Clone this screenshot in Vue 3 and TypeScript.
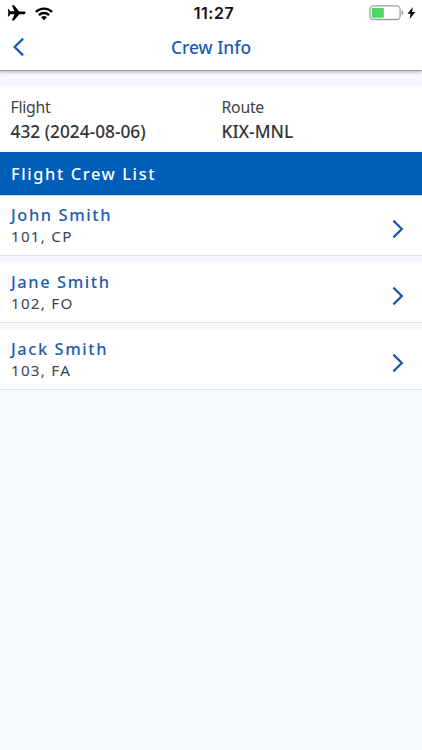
<script setup lang="ts">
interface CrewMember {
  name: string
  id: string
  role: string
}

const flight = { number: '432 (2024-08-06)', route: 'KIX-MNL' }

const crew: CrewMember[] = [
  { name: 'John Smith', id: '101', role: 'CP' },
  { name: 'Jane Smith', id: '102', role: 'FO' },
  { name: 'Jack Smith', id: '103', role: 'FA' },
]
</script>

<template>
  <div class="screen">
    <header class="header">
      <div class="status">
        <div class="status-left">
          <svg class="plane" width="19" height="18" viewBox="0 0 19 18">
            <path d="M18.6 8.8c0-.9-.8-1.35-1.8-1.35h-4.6L7 1.2H4.9L7.4 7.3H3.3L1.7 5.1H.8L1.4 8.8.8 12.5h.9l1.6-2.2h4.1L4.9 16.4H7l5.2-6.25h4.6c1 0 1.8-.45 1.8-1.35z" />
          </svg>
          <svg class="wifi" width="20" height="15" viewBox="0 0 20 15">
            <path class="arc" d="M1.9 5.9a11.6 11.6 0 0 1 16.2 0" />
            <path class="arc" d="M4.9 9.1a7.3 7.3 0 0 1 10.2 0" />
            <path d="M7.1 11.3a4.2 4.2 0 0 1 5.8 0L10 14.2z" />
          </svg>
        </div>
        <span class="time">11:27</span>
        <div class="status-right">
          <svg width="36" height="16" viewBox="0 0 36 16">
            <rect class="shell" x="0.9" y="0.9" width="30.2" height="13.6" rx="3.6" />
            <rect class="charge" x="2.8" y="2.9" width="12" height="9.8" rx="0.8" />
            <path class="cap" d="M32.6 5.1q1.9.6 1.9 2.6t-1.9 2.6z" />
          </svg>
          <svg width="9" height="14" viewBox="0 0 9 14">
            <path d="M5.9 1 .5 7.8h3L2.6 13.1 8.3 6H5z" />
          </svg>
        </div>
      </div>
      <nav class="nav">
        <button class="back" aria-label="Back">
          <svg width="12" height="20" viewBox="0 0 12 20">
            <path class="chevron" d="M10.1 1.6 1.6 10l8.5 8.4" />
          </svg>
        </button>
        <h1 class="title">Crew Info</h1>
      </nav>
    </header>

    <section class="summary">
      <div class="field">
        <span class="label">Flight</span>
        <span class="value">{{ flight.number }}</span>
      </div>
      <div class="field">
        <span class="label">Route</span>
        <span class="value">{{ flight.route }}</span>
      </div>
    </section>

    <h2 class="list-heading">Flight Crew List</h2>

    <ul class="list">
      <li v-for="member in crew" :key="member.id" class="row">
        <div class="person">
          <span class="name">{{ member.name }}</span>
          <span class="detail">{{ member.id }}, {{ member.role }}</span>
        </div>
        <svg class="go" width="12" height="20" viewBox="0 0 12 20">
          <path class="chevron" d="M1.4 1.6 9.8 10l-8.4 8.4" />
        </svg>
      </li>
    </ul>
  </div>
</template>

<style>
body {
  background: #f5f8fd;
}
</style>

<style scoped>
.screen {
  min-height: 750px;
  background: #f5f8fd;
  font-family: 'Noto Sans', 'Open Sans', sans-serif;
  color: #333538;
}
.header {
  box-sizing: border-box;
  height: 71px;
  background: #fff;
  border-bottom: 1px solid #a4a6a8;
  box-shadow: 0 1px 3px rgba(0, 0, 0, 0.3);
}
.status {
  display: grid;
  grid-template-columns: 1fr auto 1fr;
  align-items: center;
  height: 26px;
  padding: 0 6px 0 7px;
}
.status-left {
  display: flex;
  align-items: center;
  gap: 8px;
}
.arc {
  fill: none;
  stroke: #000;
  stroke-width: 2.3;
}
.time {
  padding-left: 5px;
  font: 600 16px/26px Inter, sans-serif;
  letter-spacing: 0.5px;
  color: #111;
}
.status-right {
  display: flex;
  align-items: center;
  justify-content: flex-end;
  gap: 2px;
}
.shell {
  fill: none;
  stroke: #a0a0a0;
  stroke-width: 1.3;
}
.charge {
  fill: #4cd662;
}
.cap {
  fill: #a0a0a0;
}
.nav {
  display: grid;
  grid-template-columns: 40px 1fr 40px;
  align-items: center;
  height: 42px;
}
.back {
  display: flex;
  padding: 0 0 0 12.5px;
  border: 0;
  background: none;
}
.chevron {
  fill: none;
  stroke: #1558ac;
  stroke-width: 2.2;
}
.title {
  margin: 0;
  text-align: center;
  font-size: 17.4px;
  font-weight: 500;
  line-height: 24px;
  color: #1a5cb2;
}
.summary {
  display: grid;
  grid-template-columns: 1fr 1fr;
  box-sizing: border-box;
  height: 65px;
  margin-top: 16px;
  padding-top: 8px;
  background: #fff;
}
.field {
  display: flex;
  flex-direction: column;
  padding-left: 10.5px;
}
.label {
  font-size: 15.8px;
  line-height: 24px;
  letter-spacing: -0.25px;
  color: #404246;
}
.value {
  font-size: 17.3px;
  font-weight: 500;
  line-height: 25px;
}
.list-heading {
  box-sizing: border-box;
  height: 43px;
  margin: 0;
  padding-left: 11px;
  font-size: 16.4px;
  font-weight: 500;
  line-height: 43px;
  letter-spacing: 1.6px;
  color: #fff;
  background: #005eb8;
}
.list {
  display: flex;
  flex-direction: column;
  gap: 6px;
  margin: 0;
  padding: 0;
  list-style: none;
}
.row {
  display: flex;
  align-items: center;
  justify-content: space-between;
  box-sizing: border-box;
  height: 61px;
  padding: 1px 18px 0 11px;
  background: #fff;
  border-bottom: 1px solid #dae4f3;
}
.row:first-child {
  padding-top: 0;
  border-top: 1px solid #c2dbf9;
}
.person {
  display: flex;
  flex-direction: column;
}
.name {
  font-size: 16.4px;
  font-weight: 500;
  line-height: 20px;
  letter-spacing: 1.6px;
  color: #1a5cb2;
}
.detail {
  font-size: 15.2px;
  line-height: 22px;
  letter-spacing: 1.25px;
  color: #404246;
}
.go {
  margin-top: 6px;
}
</style>
